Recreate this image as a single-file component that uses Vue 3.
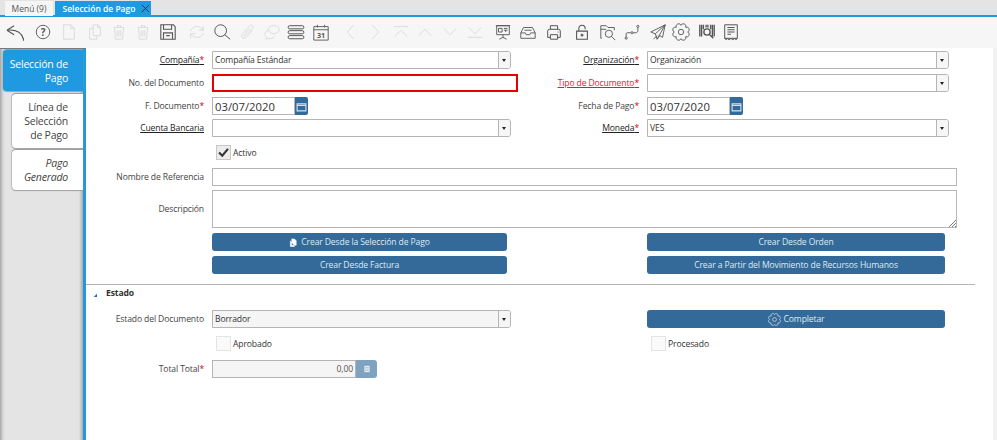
<script setup>
// puntos del engrane, lobulos redondeados alrededor del centro
function gearPath(lobes) {
  let d = ''
  for (let i = 0; i <= lobes; i++) {
    const a = (i * 2 * Math.PI) / lobes
    const x = (10 + 7.4 * Math.cos(a)).toFixed(2)
    const y = (10 + 7.4 * Math.sin(a)).toFixed(2)
    d += i === 0 ? `M${x} ${y}` : ` A2.6 2.6 0 0 1 ${x} ${y}`
  }
  return d
}

const gear = gearPath(8)

const tools = [
  { id: 'back', d: 'M1 8L9 3M1 8l8 5M1 8c9-1 17 2 19 12', w: 1.2 },
  { id: 'help', gap: 3, d: 'M17.5 10a7.5 7.5 0 1 1-15 0a7.5 7.5 0 1 1 15 0', text: '?' },
  { id: 'new', gap: 1, off: true, d: 'M4 2h8l4 4v12H4zM12 2v4h4' },
  { id: 'copy', gap: 1, off: true, d: 'M8 2h5l3 3v9H8zM13 2v3h3M8 6H4v12h8v-4' },
  { id: 'del', gap: -1, off: true, d: 'M4 5h12M8 5V3h4v2M5 5l1 13h8l1-13M8 8v7M10 8v7M12 8v7' },
  { id: 'delsel', gap: -1, off: true, d: 'M4 5h12M8 5V3h4v2M5 5l1 13h8l1-13M8 8v7M10 8v7M12 8v7' },
  { id: 'save', d: 'M2 2h14l2 2v14H2zM5 2v5h9V2M5 18v-7h10v7M8 14h4', w: 1.2 },
  { id: 'refresh', off: true, gap: 4, d: 'M3 9c1-5 8-7 12-3l2 2M17 3v5h-5M17 11c-1 5-8 7-12 3l-2-2M3 17v-5h5' },
  { id: 'find', d: 'M15 8.5a6.5 6.5 0 1 1-13 0a6.5 6.5 0 1 1 13 0M13 13l6 5', w: 1.1 },
  { id: 'attach', off: true, d: 'M16 8l-7 8c-3 3-7-1-4-4l8-9c2-2 5 1 3 3l-8 8c-1 1-2 0-1-1l6-7' },
  { id: 'chat', off: true, d: 'M18 7c0 3-3 5-6 5c-3 0-6-2-6-5s3-4 6-4s6 1 6 4zM6 8c-2 1-4 2-4 5c0 1 1 2 2 3l-1 2l3-1c3 1 6 0 7-3' },
  { id: 'list', gap: -1, d: 'M3 3h14a1.5 1.5 0 0 1 0 3.5H3A1.5 1.5 0 0 1 3 3zM3 8.5h14a1.5 1.5 0 0 1 0 3.5H3a1.5 1.5 0 0 1 0-3.5zM3 14h14a1.5 1.5 0 0 1 0 3.5H3A1.5 1.5 0 0 1 3 14z', w: 1.1 },
  { id: 'cal', d: 'M2 4h16v15H2zM2 7.5h16M6 2v3M14 2v3', text: '31', small: true },
  { id: 'prev', off: true, gap: 5, d: 'M13 2L6 10l7 8' },
  { id: 'next', gap: -1, off: true, d: 'M7 2l7 8l-7 8' },
  { id: 'first', off: true, gap: 1, d: 'M2 4h16M3 15l7-7l7 7' },
  { id: 'up', gap: -1, off: true, d: 'M3 14l7-7l7 7' },
  { id: 'down', off: true, d: 'M3 6l7 7l7-7' },
  { id: 'last', off: true, d: 'M3 5l7 7l7-7M2 16h16' },
  { id: 'report', gap: 3, d: 'M3 3h14v10H3zM2 3h16M10 13v3M6 18l4-2l4 2M5 6h4v4H5zM11 6h4M11 8h4M13 8v2' },
  { id: 'archive', d: 'M5 5h10l3 6v6H2v-6zM2 11h5l1 2h4l1-2h5M6 8h8' },
  { id: 'print', gap: 1, d: 'M6 7V3h8v4M3 16V9a2 2 0 0 1 2-2h10a2 2 0 0 1 2 2v7h-3M6 16H3M6 13h8v5H6zM14 10h1', w: 1.1 },
  { id: 'lock', gap: 3, d: 'M4 9h12v9H4zM6.5 9V6a3.5 3.5 0 0 1 7 0v1M11 13.5a1 1 0 1 1-2 0a1 1 0 1 1 2 0', w: 1.2 },
  { id: 'zoomdoc', gap: 1, d: 'M3 17H2V3h6l2 2h7v3M2 7h6M15 12a4 4 0 1 1-8 0a4 4 0 1 1 8 0M14 15l4 4' },
  { id: 'flow', gap: -1, d: 'M3.5 18a1.2 1.2 0 1 1 0-2.4a1.2 1.2 0 1 1 0 2.4zM10 12a1.2 1.2 0 1 1 0-2.4a1.2 1.2 0 1 1 0 2.4zM16.5 5a1.2 1.2 0 1 1 0-2.4a1.2 1.2 0 1 1 0 2.4zM3.5 15.5V12c0-1 1-1.200 2-1.200h3M11.200 10.800h3c1.500 0 2.300-1 2.300-2.500V5' },
  { id: 'send', gap: 1, d: 'M18 2L2 10l5 2l2 6l3-4l3 2zM18 2L7 12M18 2L9 18M9 14l-4 4' },
  { id: 'gear', gap: -2, d: gear + 'M13 10a3 3 0 1 1-6 0a3 3 0 1 1 6 0' },
  { id: 'barcode', gap: 1, d: 'M2 2v13M4 2v13M6 2v5M14 2v5M16 2v13M18 2v13M9 2v3M11 2v3M13.500 10a3.500 3.500 0 1 1-7 0a3.500 3.500 0 1 1 7 0M13 13l4 4', w: 1.5 },
  { id: 'form', gap: -1, d: 'M3 2h14v15H3zM6 5h8M6 7.500h8M6 10h8M6 12.500h4M3 17c1 2 2 2 3 0c1 2 2 2 4 0c1 2 3 2 4 0c1 2 2 2 3 0', w: 1.1 },
]
</script>

<template>
  <div class="window">
    <div class="tabbar">
      <div class="doc-tab">Menú (9)</div>
      <div class="doc-tab active">
        Selección de Pago
        <svg class="tab-close" viewBox="0 0 10 10"><path d="M1 1l8 8M9 1l-8 8" /></svg>
      </div>
    </div>

    <div class="toolbar">
      <span
        v-for="tool in tools"
        :key="tool.id"
        class="tool"
        :class="{ off: tool.off }"
        :style="{ marginLeft: (tool.gap || 0) + 'px' }"
      >
        <svg viewBox="0 0 20 20">
          <path :d="tool.d" :stroke-width="tool.w || 1" />
          <text v-if="tool.text" x="10" :y="tool.small ? 16.500 : 14" :class="{ small: tool.small }">{{ tool.text }}</text>
        </svg>
      </span>
    </div>

    <div class="body">
      <aside class="sidebar">
        <div class="side-tab current">Selección de Pago</div>
        <div class="side-tab second">Línea de Selección de Pago</div>
        <div class="side-tab italic">Pago Generado</div>
      </aside>

      <main class="content">
        <div class="form">
          <label class="lbl link">Compañía<i>*</i></label>
          <div class="select"><span>Compañía Estándar</span><b></b></div>
          <label class="lbl link">Organización<i>*</i></label>
          <div class="select"><span>Organización</span><b></b></div>
          <span></span>

          <label class="lbl">No. del Documento</label>
          <div class="input error"></div>
          <label class="lbl link red">Tipo de Documento<i>*</i></label>
          <div class="select"><span></span><b></b></div>
          <span></span>

          <label class="lbl">F. Documento<i>*</i></label>
          <div class="date">
            <div class="input big">03/07/2020</div>
            <button class="cal-btn"><svg viewBox="0 0 10 10"><path d="M1 2.500h8v6.500H1zM1 4h8" /></svg></button>
          </div>
          <label class="lbl">Fecha de Pago<i>*</i></label>
          <div class="date">
            <div class="input big">03/07/2020</div>
            <button class="cal-btn"><svg viewBox="0 0 10 10"><path d="M1 2.500h8v6.500H1zM1 4h8" /></svg></button>
          </div>
          <span></span>

          <label class="lbl link">Cuenta Bancaria</label>
          <div class="select"><span></span><b></b></div>
          <label class="lbl link">Moneda<i>*</i></label>
          <div class="select"><span>VES</span><b></b></div>
          <span></span>

          <span></span>
          <div class="check-row active-row">
            <span class="check on">
              <svg viewBox="0 0 16 16"><path d="M2.500 8l4 4l7-8.500" /></svg>
            </span>
            Activo
          </div>
          <span></span><span></span><span></span>

          <label class="lbl">Nombre de Referencia</label>
          <div class="input wide"></div>

          <label class="lbl top">Descripción</label>
          <div class="input wide area">
            <svg class="grip" viewBox="0 0 8 8"><path d="M1 8l7-7M4 8l4-4M7 8l1-1" /></svg>
          </div>

          <span></span>
          <button class="btn">
            <svg class="doc-ico" viewBox="0 0 10 10"><path d="M3 1h3l2 2v5H3z M1.500 3v6.500h5" /></svg>
            Crear Desde la Selección de Pago
          </button>
          <span></span>
          <button class="btn right">Crear Desde Orden</button>
          <span></span>

          <span></span>
          <button class="btn">Crear Desde Factura</button>
          <span></span>
          <button class="btn right">Crear a Partir del Movimiento de Recursos Humanos</button>
          <span></span>
        </div>

        <div class="section">
          <svg class="caret" viewBox="0 0 6 6"><path d="M6 1v5H1z" /></svg>
          Estado
        </div>

        <div class="form status">
          <label class="lbl">Estado del Documento</label>
          <div class="select readonly"><span>Borrador</span><b></b></div>
          <span></span>
          <button class="btn right">
            <svg class="gear-ico" viewBox="0 0 20 20"><path :d="gear + 'M13 10a3 3 0 1 1-6 0a3 3 0 1 1 6 0'" /></svg>
            Completar
          </button>
          <span></span>

          <span></span>
          <div class="check-row"><span class="check"></span>Aprobado</div>
          <span></span>
          <div class="check-row"><span class="check"></span>Procesado</div>
          <span></span>

          <label class="lbl">Total Total<i>*</i></label>
          <div class="total">
            <div class="input num">0,00</div>
            <button class="calc-btn"><svg viewBox="0 0 10 10"><path d="M2.500 2h5v6h-5zM3.500 4h3M3.500 6h3" /></svg></button>
          </div>
          <span></span><span></span><span></span>
        </div>
      </main>

      <div class="scroll-strip"></div>
    </div>
  </div>
</template>

<style scoped>
.window {
  width: 997px;
  height: 440px;
  overflow: hidden;
  display: flex;
  flex-direction: column;
  background: #fff;
  color: #333;
  font-family: "Open Sans", "Noto Sans", sans-serif;
  font-size: 8.6px;
  letter-spacing: -0.13px;
}

.tabbar {
  height: 15px;
  padding-left: 5px;
  display: flex;
  gap: 2px;
  background: #e4e4e4;
  border-bottom: 2px solid #1f9ae0;
  flex: none;
}

.doc-tab {
  height: 15px;
  width: 48px;
  margin-top: 1px;
  text-align: center;
  line-height: 15px;
  font-size: 8.5px;
  letter-spacing: 0;
  color: #555;
  background: #f5f5f5;
}

.doc-tab.active {
  width: 96px;
  padding-right: 8px;
  box-sizing: border-box;
  position: relative;
  background: #1f9ae0;
  color: #fff;
  font-weight: 600;
}

.tab-close {
  position: absolute;
  right: 1px;
  top: 3px;
  width: 9px;
  height: 9px;
  fill: none;
  stroke: #234;
  stroke-width: 1;
}

.toolbar {
  height: 31px;
  flex: none;
  display: flex;
  align-items: center;
  padding-left: 2.500px;
  background: #f6f6f6;
}

.tool {
  width: 25px;
  height: 20px;
  display: flex;
  justify-content: center;
  flex: none;
}

.tool svg {
  width: 18px;
  height: 18px;
  fill: none;
  stroke: #555;
}

.tool text {
  fill: #555;
  stroke: none;
  font-size: 11px;
  font-weight: 700;
  text-anchor: middle;
  font-family: "Open Sans", sans-serif;
}

.tool text.small {
  font-size: 8px;
}

.tool.off svg {
  stroke: #d9d9d9;
}

.body {
  flex: 1;
  display: flex;
  min-height: 0;
}

.sidebar {
  width: 86px;
  flex: none;
  box-sizing: border-box;
  padding-top: 1px;
  background: linear-gradient(to right, #a8a8a8, #d6d6d6 3px, #e4e4e4 5px, #e4e4e4 79px, #a8a8a8 83px);
  border-top: 1px solid #777;
  border-right: 3px solid #1f9ae0;
  display: flex;
  flex-direction: column;
  align-items: flex-end;
  gap: 2px;
}

.side-tab {
  width: 71px;
  height: 40px;
  box-sizing: border-box;
  padding: 6px 15px 0 4px;
  text-align: right;
  background: #fff;
  border-radius: 4px 0 0 4px;
  box-shadow: 0 -1px 1px #999, 0 1px 1px #a0a0a0, -1px 0 1px #c4c4c4;
  font-size: 10.500px;
  letter-spacing: -0.2px;
  line-height: 14px;
  color: #444;
}

.side-tab.current {
  width: 80px;
  height: 41px;
  margin-bottom: 1px;
  padding-top: 7px;
  background: #1f9ae0;
  color: #fff;
}

.side-tab.second {
  height: 54px;
}

.side-tab.italic {
  font-style: italic;
}

.content {
  flex: 1;
  min-width: 0;
  padding-top: 3px;
}

.form {
  display: grid;
  grid-template-columns: 126px 299px 136px 302px 8px;
  grid-template-rows: 23px 23px 22px 24px 25px 22px 43px 23px 28px;
  align-items: start;
}

.form.status {
  grid-template-rows: 25px 25px 18px;
}

.lbl {
  height: 18px;
  line-height: 19px;
  padding-right: 8px;
  text-align: right;
  white-space: nowrap;
  color: #444;
}

.lbl.top {
  line-height: 38px;
  height: 38px;
}

.lbl i {
  color: #e00000;
  font-style: normal;
}

.lbl.link {
  text-decoration: underline;
  color: #222;
}

.lbl.red {
  color: #e8143c;
}

.input,
.select {
  height: 18px;
  box-sizing: border-box;
  border: 1px solid #b5b5b5;
  background: #fff;
  line-height: 17px;
  padding-left: 2px;
  color: #333;
}

.input.error {
  width: 306px;
  border: 2px solid #e80000;
}

.input.wide {
  grid-column: 2 / -1;
}

.input.area {
  height: 38px;
  position: relative;
}

.grip {
  position: absolute;
  right: 0;
  bottom: 0;
  width: 8px;
  height: 8px;
  fill: none;
  stroke: #555;
  stroke-width: 0.8;
}

.select {
  display: flex;
  border-radius: 0 3px 3px 0;
}

.select span {
  flex: 1;
}

.select b {
  width: 11px;
  flex: none;
  border-left: 1px solid #b5b5b5;
  background: #f6f6f6;
  border-radius: 0 2px 2px 0;
  position: relative;
}

.select b::after {
  content: "";
  position: absolute;
  left: 3px;
  top: 7px;
  border: 2.500px solid transparent;
  border-top: 3px solid #222;
  border-bottom: 0;
}

.select.readonly,
.select.readonly b,
.input.num {
  background: #f5f5f5;
}

.date {
  display: flex;
}

.date .input {
  width: 83px;
}

.input.big {
  font-size: 11.300px;
  letter-spacing: 0;
}

.cal-btn {
  width: 13px;
  height: 18px;
  padding: 0;
  border: none;
  border-radius: 0 2px 2px 0;
  background: #336a99;
}

.cal-btn svg {
  display: block;
  margin: 3px auto;
  width: 11px;
  height: 11px;
  fill: none;
  stroke: #d5e2ee;
  stroke-width: 1;
}

.check-row {
  display: flex;
  align-items: center;
  gap: 2px;
  height: 17px;
  padding-left: 4px;
  color: #333;
}

.active-row {
  margin-top: 1px;
}

.check {
  width: 15px;
  height: 15px;
  box-sizing: border-box;
  border: 1px solid #e4e4e4;
  background: #fafafa;
  flex: none;
}

.check.on {
  background: #ececec;
  border-color: #c8c8c8;
}

.check svg {
  display: block;
  fill: none;
  stroke: #333;
  stroke-width: 2.600;
}

.btn {
  width: 295px;
  height: 18px;
  padding: 0;
  border: none;
  border-radius: 3px;
  background: #336a99;
  color: #dfe9f2;
  font-family: inherit;
  font-size: inherit;
  letter-spacing: inherit;
  display: flex;
  align-items: center;
  justify-content: center;
  gap: 3px;
}

.btn.right {
  width: 298px;
}

.doc-ico {
  width: 9px;
  height: 9px;
  fill: #fff;
  stroke: #fff;
  stroke-width: 0.6;
}

.gear-ico {
  width: 13px;
  height: 13px;
  fill: none;
  stroke: #dfe9f2;
  stroke-width: 1;
}

.section {
  margin-right: 18px;
  height: 26px;
  border-top: 1px solid #b5b5b5;
  display: flex;
  align-items: flex-start;
  padding: 2px 0 0 7px;
  box-sizing: border-box;
  gap: 9px;
  font-weight: 700;
  line-height: 13px;
  color: #333;
}

.caret {
  width: 4px;
  height: 4px;
  margin-top: 6px;
  fill: #1f6fb0;
}

.total {
  display: flex;
}

.input.num {
  width: 144px;
  text-align: right;
  padding-right: 2px;
  color: #555;
}

.calc-btn {
  width: 21px;
  height: 18px;
  padding: 0;
  border: none;
  border-radius: 0 3px 3px 0;
  background: #7ea2c0;
}

.calc-btn svg {
  display: block;
  margin: 0 auto;
  width: 12px;
  height: 12px;
  fill: #e4edf4;
  stroke: #7ea2c0;
  stroke-width: 0.6;
}

.scroll-strip {
  width: 4px;
  flex: none;
  background: #f2f2f2;
}
</style>

<style>
html,
body {
  background: #fff;
}
</style>
